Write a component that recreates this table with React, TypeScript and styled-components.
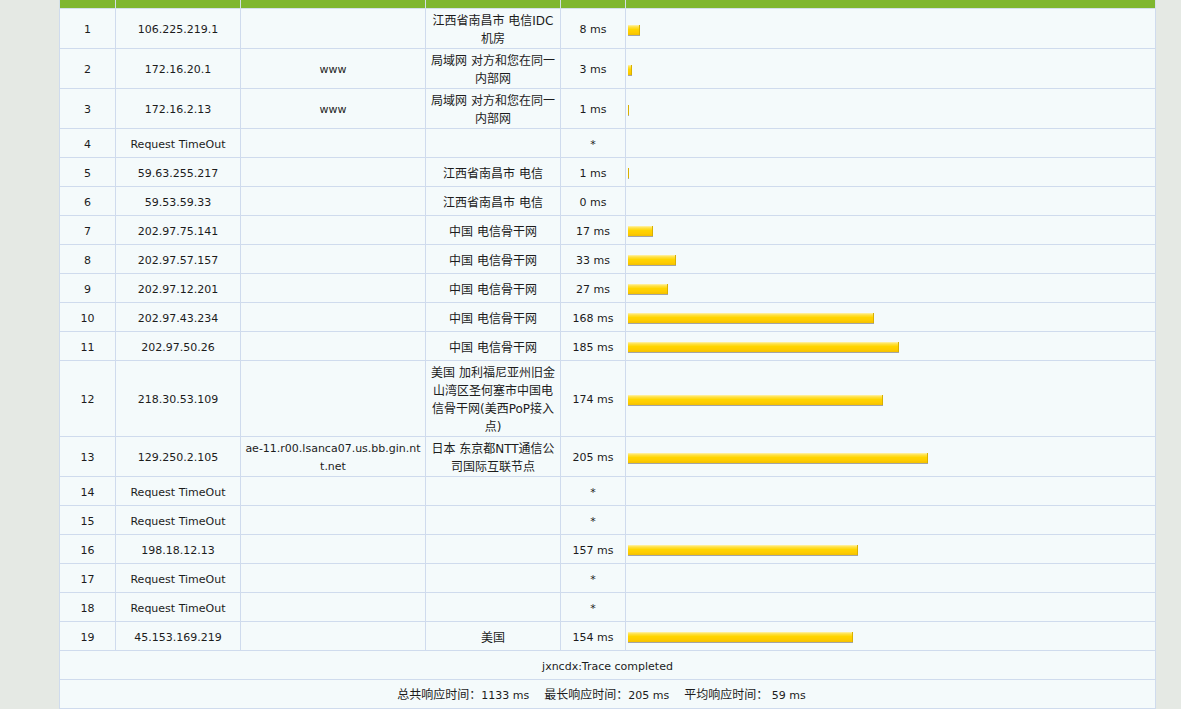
import React from 'react';
import styled, { createGlobalStyle } from 'styled-components';

const GlobalStyle = createGlobalStyle`
  html, body {
    margin: 0;
    padding: 0;
    background: #e5e9e4;
  }
  body {
    font-family: "DejaVu Sans", "Noto Sans CJK SC", sans-serif;
    font-size: 11px;
    color: #1c1c1c;
  }
`;

const Page = styled.div`
  padding-left: 59px;
`;

const Table = styled.table`
  width: 1097px;
  border-collapse: collapse;
  table-layout: fixed;
  background: #f4fafb;
`;

const HeadCell = styled.th`
  height: 8px;
  padding: 0;
  background: #7fb72f;
  border: 1px solid #d3e0e8;
  border-top: 0;
`;

const Cell = styled.td<{ $align?: 'left' | 'center'; $cjk?: boolean; $breakAll?: boolean }>`
  height: 25px;
  padding: 3px 4px 0;
  border: 1px solid #cfdbed;
  text-align: ${(p) => p.$align ?? 'center'};
  vertical-align: middle;
  line-height: 18px;
  font-size: ${(p) => (p.$cjk ? '12px' : '11px')};
  word-break: ${(p) => (p.$breakAll ? 'break-all' : 'normal')};
`;

const BarCell = styled(Cell)`
  padding-left: 2px;
  padding-right: 2px;
`;

const Bar = styled.span`
  display: block;
  height: 10px;
  box-sizing: content-box;
  background: linear-gradient(
    to bottom,
    #fff3b0 0%,
    #ffe24a 18%,
    #ffd500 45%,
    #ffcc00 75%,
    #f2c100 100%
  );
  border-bottom: 1px solid #a4a4a4;
  box-shadow: inset -1px 0 0 #d9b000;
`;

const FootCell = styled.td<{ $trail?: boolean }>`
  height: 25px;
  padding: 3px ${(p) => (p.$trail ? '16px' : '4px')} 0 4px;
  border: 1px solid #cfdbed;
  text-align: center;
  vertical-align: middle;
  line-height: 18px;
`;

const Label = styled.span<{ $gap?: boolean }>`
  font-size: 12px;
  margin-left: ${(p) => (p.$gap ? '15px' : '0')};
`;

type Hop = {
  n: number;
  ip: string;
  host?: string;
  loc?: string;
  ms?: number;
};

const hops: Hop[] = [
  { n: 1, ip: '106.225.219.1', loc: '江西省南昌市 电信IDC机房', ms: 8 },
  { n: 2, ip: '172.16.20.1', host: 'www', loc: '局域网 对方和您在同一内部网', ms: 3 },
  { n: 3, ip: '172.16.2.13', host: 'www', loc: '局域网 对方和您在同一内部网', ms: 1 },
  { n: 4, ip: 'Request TimeOut' },
  { n: 5, ip: '59.63.255.217', loc: '江西省南昌市 电信', ms: 1 },
  { n: 6, ip: '59.53.59.33', loc: '江西省南昌市 电信', ms: 0 },
  { n: 7, ip: '202.97.75.141', loc: '中国 电信骨干网', ms: 17 },
  { n: 8, ip: '202.97.57.157', loc: '中国 电信骨干网', ms: 33 },
  { n: 9, ip: '202.97.12.201', loc: '中国 电信骨干网', ms: 27 },
  { n: 10, ip: '202.97.43.234', loc: '中国 电信骨干网', ms: 168 },
  { n: 11, ip: '202.97.50.26', loc: '中国 电信骨干网', ms: 185 },
  {
    n: 12,
    ip: '218.30.53.109',
    loc: '美国 加利福尼亚州旧金山湾区圣何塞市中国电信骨干网(美西PoP接入点)',
    ms: 174,
  },
  {
    n: 13,
    ip: '129.250.2.105',
    host: 'ae-11.r00.lsanca07.us.bb.gin.ntt.net',
    loc: '日本 东京都NTT通信公司国际互联节点',
    ms: 205,
  },
  { n: 14, ip: 'Request TimeOut' },
  { n: 15, ip: 'Request TimeOut' },
  { n: 16, ip: '198.18.12.13', ms: 157 },
  { n: 17, ip: 'Request TimeOut' },
  { n: 18, ip: 'Request TimeOut' },
  { n: 19, ip: '45.153.169.219', loc: '美国', ms: 154 },
];

const MAX_MS = 205;
const MAX_BAR = 300;

export default function App() {
  return (
    <>
      <GlobalStyle />
      <Page>
        <Table>
          <colgroup>
            <col style={{ width: 56 }} />
            <col style={{ width: 125 }} />
            <col style={{ width: 185 }} />
            <col style={{ width: 135 }} />
            <col style={{ width: 65 }} />
            <col />
          </colgroup>
          <thead>
            <tr>
              <HeadCell />
              <HeadCell />
              <HeadCell />
              <HeadCell />
              <HeadCell />
              <HeadCell />
            </tr>
          </thead>
          <tbody>
            {hops.map((h) => (
              <tr key={h.n}>
                <Cell>{h.n}</Cell>
                <Cell>{h.ip}</Cell>
                <Cell $breakAll>{h.host ?? ''}</Cell>
                <Cell $cjk>{h.loc ?? ''}</Cell>
                <Cell>{h.ms === undefined ? '*' : `${h.ms} ms`}</Cell>
                <BarCell $align="left">
                  {h.ms ? (
                    <Bar style={{ width: Math.max(1, Math.round((h.ms / MAX_MS) * MAX_BAR)) }} />
                  ) : null}
                </BarCell>
              </tr>
            ))}
            <tr>
              <FootCell colSpan={6}>jxncdx:Trace completed</FootCell>
            </tr>
            <tr>
              <FootCell colSpan={6} $trail>
                <Label>总共响应时间：</Label>1133 ms
                <Label $gap>最长响应时间：</Label>205 ms
                <Label $gap>平均响应时间：</Label> 59 ms
              </FootCell>
            </tr>
          </tbody>
        </Table>
      </Page>
    </>
  );
}
